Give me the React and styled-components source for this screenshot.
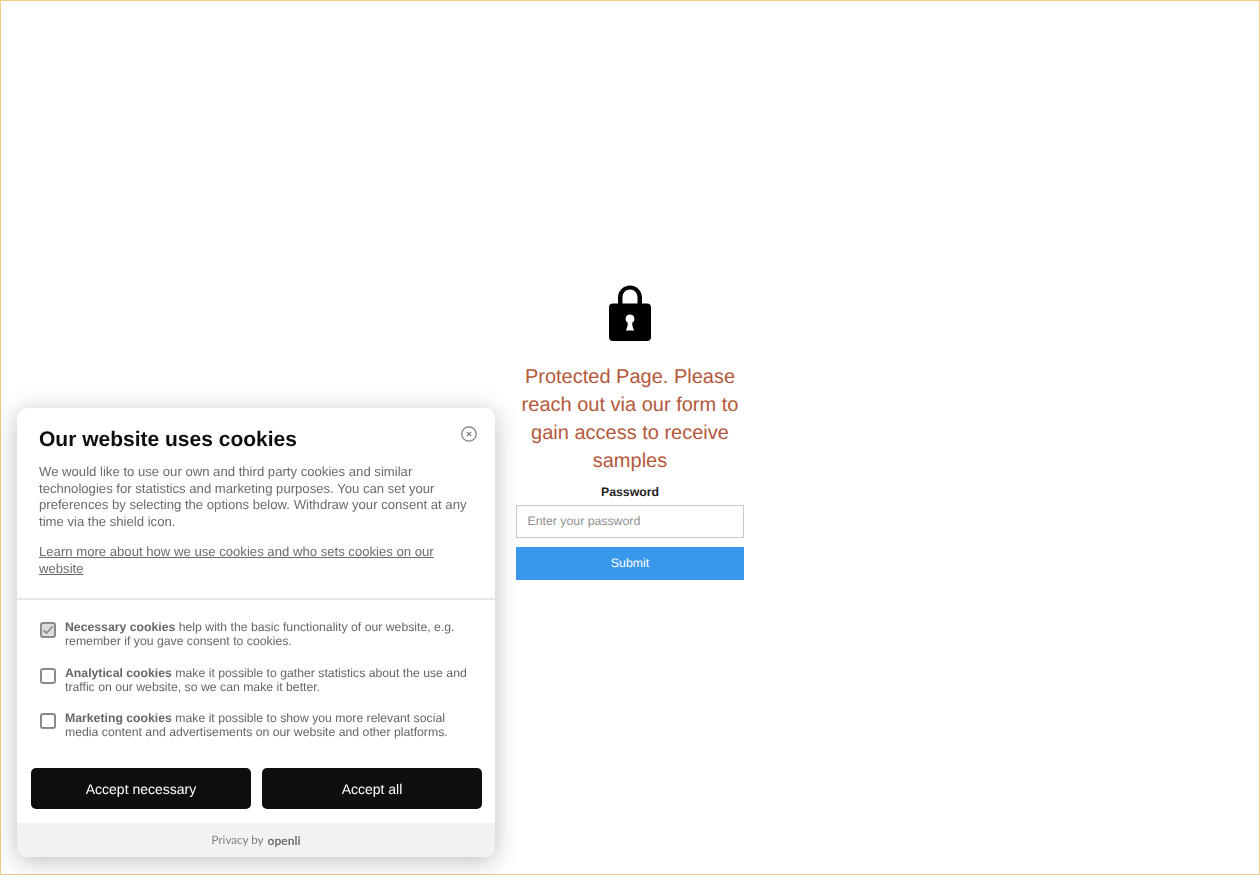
import React from "react";
import styled, { createGlobalStyle } from "styled-components";

const Global = createGlobalStyle`
  * { box-sizing: border-box; }
  html, body { margin: 0; padding: 0; background: #fff; }
  body { font-family: "Liberation Sans", Arial, sans-serif; text-rendering: geometricPrecision; }
  input, button { text-rendering: geometricPrecision; }
`;

const Page = styled.div`
  height: 875px;
  border: 1px solid #f3c98b;
  display: flex;
  justify-content: center;
  align-items: flex-start;
  padding-top: 284px;
`;

const Gate = styled.main`
  width: 228px;
  display: flex;
  flex-direction: column;
  align-items: center;
`;

const LockIcon = styled.svg`
  width: 42px;
  height: 56px;
  display: block;
  margin-bottom: 22px;
`;

const Heading = styled.h1`
  margin: 0 0 10px;
  font-size: 20px;
  line-height: 28px;
  font-weight: 400;
  color: #b5583a;
  text-align: center;
`;

const Label = styled.label`
  font-size: 12.3px;
  line-height: 14px;
  font-weight: 700;
  color: #222;
  margin-bottom: 6px;
`;

const PasswordInput = styled.input`
  width: 100%;
  height: 33px;
  border: 1px solid #c9c9c9;
  background: #fff;
  padding: 0 0 2px 10.5px;
  margin: 0 0 9px;
  font: 12.3px "Liberation Sans", Arial, sans-serif;
  outline: none;
  &::placeholder { color: #8f8f8f; opacity: 1; }
`;

const Submit = styled.button`
  width: 100%;
  height: 33px;
  border: 0;
  padding: 0 0 2px;
  background: #3898ec;
  color: #fff;
  font: 12.3px "Liberation Sans", Arial, sans-serif;
`;

const Banner = styled.section`
  position: fixed;
  left: 17px;
  top: 408px;
  width: 478px;
  height: 449px;
  background: #fff;
  border-radius: 10px;
  overflow: hidden;
  box-shadow: 0 4px 24px rgba(0, 0, 0, 0.26);
  display: flex;
  flex-direction: column;
`;

const Intro = styled.div`
  position: relative;
  height: 192px;
  padding: 20px 22px 0;
  border-bottom: 2px solid #e6e6e6;
`;

const Title = styled.h2`
  margin: 0 0 13px;
  font-size: 21px;
  line-height: 23px;
  font-weight: 700;
  color: #0e0e0e;
`;

const Close = styled.button`
  position: absolute;
  top: 18px;
  right: 18px;
  width: 16px;
  height: 16px;
  padding: 0;
  border: 0;
  background: none;
`;

const Text = styled.p`
  margin: 0 0 14px;
  font-size: 13.14px;
  line-height: 16.5px;
  color: #6b6b6b;
`;

const MoreLink = styled.a`
  display: block;
  font-size: 13.14px;
  line-height: 16.5px;
  color: #6b6b6b;
  text-decoration: underline;
`;

const Options = styled.div`
  height: 168px;
  padding: 20px 22px 0 23px;
  display: flex;
  flex-direction: column;
  gap: 17.5px;
`;

const Option = styled.div`
  display: flex;
  align-items: flex-start;
  gap: 9px;
`;

const Check = styled.span`
  flex: none;
  width: 16px;
  height: 16px;
  margin-top: 2px;
  border: 2px solid #8a8a8a;
  border-radius: 3px;
  background: ${(p) => (p.$on ? "#dcdcdc" : "#fff")};
  display: flex;
  align-items: center;
  justify-content: center;
`;

const OptionText = styled.div`
  font-size: 12.25px;
  line-height: 14px;
  color: #666;
  b { font-weight: 700; }
`;

const Actions = styled.div`
  display: flex;
  gap: 11px;
  padding: 0 13px 0 14px;
  height: 55px;
`;

const Action = styled.button`
  flex: 1;
  height: 41px;
  border: 0;
  border-radius: 5px;
  background: #0e0e0e;
  color: #fff;
  font: 14px "Liberation Sans", Arial, sans-serif;
`;

const Footer = styled.footer`
  flex: 1;
  background: #f2f2f2;
  display: flex;
  align-items: center;
  justify-content: center;
  gap: 4px;
  font-family: Lato, sans-serif;
  font-size: 11.6px;
  color: #808080;
`;

const Brand = styled.span`
  font-family: Lato, sans-serif;
  font-weight: 700;
  font-size: 12px;
  color: #6e6e6e;
`;

export default function App() {
  return (
    <>
      <Global />
      <Page>
        <Gate>
          <LockIcon viewBox="0 0 42 56" aria-hidden="true">
            <path
              fill="#000"
              fillRule="evenodd"
              d="M4 18.5h5v-6C9 5.6 14.4 0.5 21 0.5S33 5.6 33 12.5v6h5a4 4 0 0 1 4 4V52a4 4 0 0 1-4 4H4a4 4 0 0 1-4-4V22.500a4 4 0 0 1 4-4zM13.500 18.500h15v-6C28.500 7.800 25.200 4.500 21 4.500s-7.500 3.300-7.500 8v6zM21 29.500a4.400 4.400 0 0 0-2.200 8.200c0 3-.8 5.500-2 7.800h8.400c-1.200-2.300-2-4.800-2-7.800a4.400 4.400 0 0 0-2.200-8.200z"
            />
          </LockIcon>
          <Heading>Protected Page. Please reach out via our form to gain access to receive samples</Heading>
          <Label htmlFor="pw">Password</Label>
          <PasswordInput id="pw" type="password" placeholder="Enter your password" />
          <Submit>Submit</Submit>
        </Gate>
      </Page>
      <Banner>
        <Intro>
          <Title>Our website uses cookies</Title>
          <Close aria-label="Close">
            <svg width="16" height="16" viewBox="0 0 16 16" fill="none" stroke="#777" aria-hidden="true">
              <circle cx="8" cy="8" r="7.2" strokeWidth="1.2" />
              <path d="M5.800 5.800l4.400 4.400M10.200 5.800l-4.400 4.400" strokeWidth="1.2" />
            </svg>
          </Close>
          <Text>
            We would like to use our own and third party cookies and similar technologies for statistics and marketing
            purposes. You can set your preferences by selecting the options below. Withdraw your consent at any time via
            the shield icon.
          </Text>
          <MoreLink href="#">Learn more about how we use cookies and who sets cookies on our website</MoreLink>
        </Intro>
        <Options>
          <Option>
            <Check $on>
              <svg width="12" height="12" viewBox="0 0 12 12" fill="none" stroke="#8a8a8a" strokeWidth="1.7" aria-hidden="true">
                <path d="M1.500 6.200l3 2.900L10.500 2.500" />
              </svg>
            </Check>
            <OptionText>
              <b>Necessary cookies</b> help with the basic functionality of our website, e.g. remember if you gave consent
              to cookies.
            </OptionText>
          </Option>
          <Option>
            <Check />
            <OptionText>
              <b>Analytical cookies</b> make it possible to gather statistics about the use and traffic on our website, so
              we can make it better.
            </OptionText>
          </Option>
          <Option>
            <Check />
            <OptionText>
              <b>Marketing cookies</b> make it possible to show you more relevant social media content and advertisements
              on our website and other platforms.
            </OptionText>
          </Option>
        </Options>
        <Actions>
          <Action>Accept necessary</Action>
          <Action>Accept all</Action>
        </Actions>
        <Footer>
          Privacy by <Brand>openli</Brand>
        </Footer>
      </Banner>
    </>
  );
}
